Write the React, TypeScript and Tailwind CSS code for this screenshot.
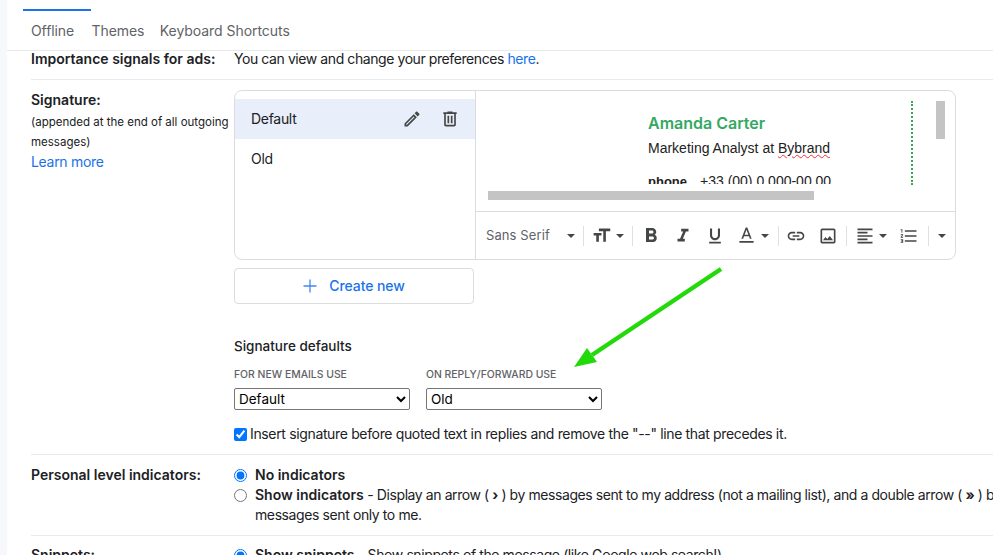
import React from "react";

const I = ({ d, size = 24, className = "" }: { d: string; size?: number; className?: string }) => (
  <svg width={size} height={size} viewBox="0 0 24 24" fill="currentColor" className={`shrink-0 ${className}`}>
    <path d={d} />
  </svg>
);

const Caret = ({ className = "" }: { className?: string }) => (
  <svg width="10" height="4" viewBox="-1 0 10 4" fill="currentColor" className={`shrink-0 ${className}`}>
    <path d="M0 0h8L4 4z" />
  </svg>
);

const Sep = ({ className = "" }: { className?: string }) => <div className={`w-px h-5 bg-[#e0e0e0] shrink-0 ${className}`} />;

const P = {
  tt: "M9 4v3h5v12h3V7h5V4H9zm-6 8h3v7h3v-7h3V9H3v3z",
  b: "M15.6 10.79c.97-.67 1.65-1.77 1.65-2.79 0-2.26-1.75-4-4-4H7v14h7.04c2.09 0 3.71-1.7 3.71-3.79 0-1.52-.86-2.82-2.15-3.42zM10 6.5h3c.83 0 1.5.67 1.5 1.5s-.67 1.5-1.5 1.5h-3v-3zm3.5 9H10v-3h3.5c.83 0 1.5.67 1.5 1.5s-.67 1.5-1.5 1.5z",
  i: "M10 4v3h2.21l-3.42 8H6v3h8v-3h-2.21l3.42-8H18V4z",
  u: "M12 17c3.31 0 6-2.69 6-6V3h-2.5v8c0 1.93-1.57 3.5-3.5 3.5S8.5 12.93 8.5 11V3H6v8c0 3.31 2.69 6 6 6zm-7 2v2h14v-2H5z",
  a: "M11 2L5.5 16h2.25l1.12-3h6.25l1.12 3h2.25L13 2h-2zm-1.38 9L12 4.67 14.38 11H9.62zM3 19h18v2H3z",
  link: "M3.9 12c0-1.71 1.39-3.1 3.1-3.1h4V7H7c-2.76 0-5 2.24-5 5s2.24 5 5 5h4v-1.9H7c-1.71 0-3.1-1.39-3.1-3.1zM8 13h8v-2H8v2zm9-6h-4v1.9h4c1.71 0 3.1 1.39 3.1 3.1s-1.39 3.1-3.1 3.1h-4V17h4c2.76 0 5-2.24 5-5s-2.24-5-5-5z",
  img: "M19 5v14H5V5h14m0-2H5c-1.1 0-2 .9-2 2v14c0 1.1.9 2 2 2h14c1.1 0 2-.9 2-2V5c0-1.1-.9-2-2-2zm-4.86 8.86l-3 3.87L9 13.14 6 17h12l-3.86-5.14z",
  align: "M15 15H3v2h12v-2zm0-8H3v2h12V7zM3 13h18v-2H3v2zm0 8h18v-2H3v2zM3 3v2h18V3H3z",
  num: "M2 17h2v.5H3v1h1v.5H2v1h3v-4H2v1zm1-9h1V4H2v1h1v3zm-1 3h1.8L2 13.1v.9h3v-1H3.2L5 10.9V10H2v1zm5-6v2h14V5H7zm0 14h14v-2H7v2zm0-6h14v-2H7v2z",
  edit: "M14.06 9.02l.92.92L5.92 19H5v-.92l9.06-9.06M17.66 3c-.25 0-.51.1-.7.29l-1.83 1.83 3.75 3.75 1.83-1.83c.39-.39.39-1.02 0-1.41l-2.34-2.34c-.2-.2-.45-.29-.71-.29zm-3.6 3.19L3 17.25V21h3.75L17.81 9.94l-3.75-3.75z",
  trash: "M15 4V3H9v1H4v2h1v13c0 1.1.9 2 2 2h10c1.1 0 2-.9 2-2V6h1V4h-5zm2 15H7V6h10v13zM9 8h2v9H9zm4 0h2v9h-2z",
};

const Radio = ({ on }: { on?: boolean }) => (
  <input type="radio" readOnly checked={!!on} className="w-[13px] h-[13px] m-0 shrink-0 accent-[#0075ff]" />
);

export default function App() {
  return (
    <div className="relative flex h-[555px] w-[993px] overflow-hidden bg-white text-[14px] leading-[20px] text-[#202124] font-['Inter','Roboto',sans-serif]">
      <div className="w-[7px] shrink-0 bg-[#f6f8fc]" />
      <div className="flex-1 min-w-0 flex flex-col">
        {/* tabs */}
        <div className="h-[51px] shrink-0 border-b border-[#e8eaed]">
          <div className="ml-[16px] w-[68px] h-[2px] mt-[9px] bg-[#1a73e8]" />
          <div className="flex ml-[24px] mt-[10px] text-[#5f6368] tracking-[-0.1px]">
            <span>Offline</span>
            <span className="ml-[17.5px]">Themes</span>
            <span className="ml-[15.5px] tracking-[-0.05px]">Keyboard Shortcuts</span>
          </div>
        </div>

        <div className="pl-[24px]">
          {/* importance */}
          <div className="flex h-[29px] border-b border-[#e8eaed]">
            <div className="w-[203px] font-semibold shrink-0 mt-[-2px] whitespace-nowrap">Importance signals for ads:</div>
            <div className="mt-[-2px] whitespace-nowrap tracking-[-0.42px]">
              You can view and change your preferences <span className="text-[#1a73e8]">here</span>.
            </div>
          </div>

          {/* signature */}
          <div className="flex h-[375px] border-b border-[#e8eaed]">
            <div className="w-[203px] shrink-0 pt-[10px]">
              <div className="font-semibold">Signature:</div>
              <div className="text-[11.5px] leading-[21px] mt-[1px] whitespace-nowrap pt-[1px] h-[21px]">(appended at the end of all outgoing</div>
              <div className="text-[11.5px] leading-[21px]">messages)</div>
              <div className="text-[#1a73e8] mt-[-1px] tracking-[-0.3px]">Learn more</div>
            </div>

            <div className="flex-1 min-w-0 pt-[10px]">
              <div className="flex w-[722px] h-[170px] border border-[#dadce0] rounded-[8px] overflow-hidden">
                <div className="w-[241px] shrink-0 border-r border-[#dadce0] pt-[8px]">
                  <div className="flex items-center h-[40px] pl-[16px] pr-[15px] bg-[#e8eefa]">
                    <span className="flex-1 tracking-[-0.3px]">Default</span>
                    <I d={P.edit} size={20} className="text-[#444746] mr-[18px]" />
                    <I d={P.trash} size={20} className="text-[#444746]" />
                  </div>
                  <div className="flex items-center h-[40px] pl-[16px] tracking-[-0.3px]">Old</div>
                </div>

                <div className="flex-1 min-w-0 flex flex-col">
                  <div className="relative h-[121px] border-b border-[#dadce0] shrink-0">
                    <div className="h-[93px] overflow-hidden pl-[172px] pt-[20px] font-['Liberation_Sans',sans-serif]">
                      <div className="text-[16px] leading-[24px] font-semibold text-[#34a862] font-['Inter',sans-serif] h-[24px]">Amanda Carter</div>
                      <div className="leading-[20px] mt-[3px] text-[#222]">
                        Marketing Analyst at <span className="underline decoration-wavy decoration-red-500 decoration-[1px]">Bybrand</span>
                      </div>
                      <div className="mt-[13px] text-[#222] whitespace-nowrap">
                        <b className="text-[13px] mr-[13px]">phone</b>+33 (00) 0 000-00 00
                      </div>
                    </div>
                    <div className="absolute left-[435px] top-[10px] h-[84px] border-l-2 border-dotted border-[#34a853]" />
                    <div className="absolute left-[460px] top-[10px] w-[9px] h-[38px] bg-[#c4c4c4]" />
                    <div className="absolute left-[12px] top-[100px] w-[326px] h-[9px] bg-[#c4c4c4]" />
                  </div>
                  <div className="flex-1 flex items-center pl-[10px] text-[#444746]">
                    <span className="w-[80px] pb-[2px] text-[13px] tracking-[0.1px] text-[#5f6368] whitespace-nowrap">Sans Serif</span>
                    <Caret />
                    <Sep className="ml-[7px]" />
                    <I d={P.tt} size={21} className="ml-[7px]" />
                    <Caret className="ml-[3px]" />
                    <Sep className="ml-[7px]" />
                    <I d={P.b} size={24} className="ml-[6px]" />
                    <I d={P.i} size={22} className="ml-[9px]" />
                    <I d={P.u} size={20} className="ml-[11px]" />
                    <I d={P.a} size={19} className="ml-[12px]" />
                    <Caret className="ml-[4px]" />
                    <Sep className="ml-[8px]" />
                    <I d={P.link} size={20} className="ml-[7px]" />
                    <I d={P.img} size={20} className="ml-[12px]" />
                    <Sep className="ml-[8px]" />
                    <I d={P.align} size={20} className="ml-[8px]" />
                    <Caret className="ml-[3px]" />
                    <I d={P.num} size={20} className="ml-[11px]" />
                    <Sep className="ml-[9px]" />
                    <Caret className="ml-[8px]" />
                  </div>
                </div>
              </div>

              <div className="flex items-center justify-center gap-[12px] w-[240px] h-[36px] mt-[8px] border border-[#dadce0] rounded-[4px] text-[#1a73e8] font-medium tracking-[-0.1px]">
                <svg width="14" height="14" viewBox="0 0 14 14" fill="none" stroke="#4285f4" strokeWidth="1.3">
                  <path d="M7 0.5v13M0.5 7h13" />
                </svg>
                Create new
              </div>

              <div className="mt-[32px] text-[13.5px] leading-[20px] font-medium">Signature defaults</div>
              <div className="flex gap-[16px] mt-[11px]">
                <div className="w-[176px]">
                  <div className="text-[10.4px] leading-[16px] text-[#5f6368] font-medium whitespace-nowrap">FOR NEW EMAILS USE</div>
                  <select className="block w-full h-[22px] mt-[5px] border border-[#767676] rounded-[2px] bg-white text-[13.5px] text-black appearance-auto" defaultValue="Default">
                    <option>Default</option>
                  </select>
                </div>
                <div className="w-[176px]">
                  <div className="text-[10.4px] leading-[16px] text-[#5f6368] font-medium whitespace-nowrap">ON REPLY/FORWARD USE</div>
                  <select className="block w-full h-[22px] mt-[5px] border border-[#767676] rounded-[2px] bg-white text-[13.5px] text-black appearance-auto" defaultValue="Old">
                    <option>Old</option>
                  </select>
                </div>
              </div>
              <div className="flex items-center mt-[14px] h-[20px] whitespace-nowrap">
                <input type="checkbox" readOnly checked className="w-[13px] h-[13px] m-0 shrink-0 accent-[#0075ff]" />
                <span className="ml-[3px] tracking-[-0.35px]">Insert signature before quoted text in replies and remove the "--" line that precedes it.</span>
              </div>
            </div>
          </div>

          {/* personal indicators */}
          <div className="flex h-[81px] border-b border-[#e8eaed] pt-[10px]">
            <div className="w-[203px] shrink-0 font-semibold whitespace-nowrap">Personal level indicators:</div>
            <div className="flex-1 min-w-0">
              <div className="flex items-center h-[20px] gap-[8px]">
                <Radio on />
                <span className="font-semibold">No indicators</span>
              </div>
              <div className="flex items-center h-[20px] gap-[8px] whitespace-nowrap">
                <Radio />
                <span className="tracking-[-0.42px]">
                  <b className="font-semibold tracking-[0px]">Show indicators</b> - Display an arrow ( <b>›</b> ) by messages sent to my address (not a mailing list), and a double arrow ( <b>»</b> ) b
                </span>
              </div>
              <div className="pl-[21px] h-[20px] tracking-[-0.4px]">messages sent only to me.</div>
            </div>
          </div>

          {/* snippets */}
          <div className="flex pt-[9px]">
            <div className="w-[203px] shrink-0 font-semibold">Snippets:</div>
            <div className="flex items-center h-[20px] gap-[8px] whitespace-nowrap">
              <Radio on />
              <span className="tracking-[-0.4px]">
                <b className="font-semibold tracking-[0px]">Show snippets</b> - Show snippets of the message (like Google web search!).
              </span>
            </div>
          </div>
        </div>
      </div>

      {/* annotation arrow over the page */}
      <svg className="absolute left-[565px] top-[260px]" width="170" height="115" viewBox="0 0 170 115">
        <path d="M156 9L27 95" stroke="#22d90a" strokeWidth="4.5" fill="none" />
        <path d="M9 107L22 88L32 102z" fill="#22d90a" />
      </svg>
    </div>
  );
}
